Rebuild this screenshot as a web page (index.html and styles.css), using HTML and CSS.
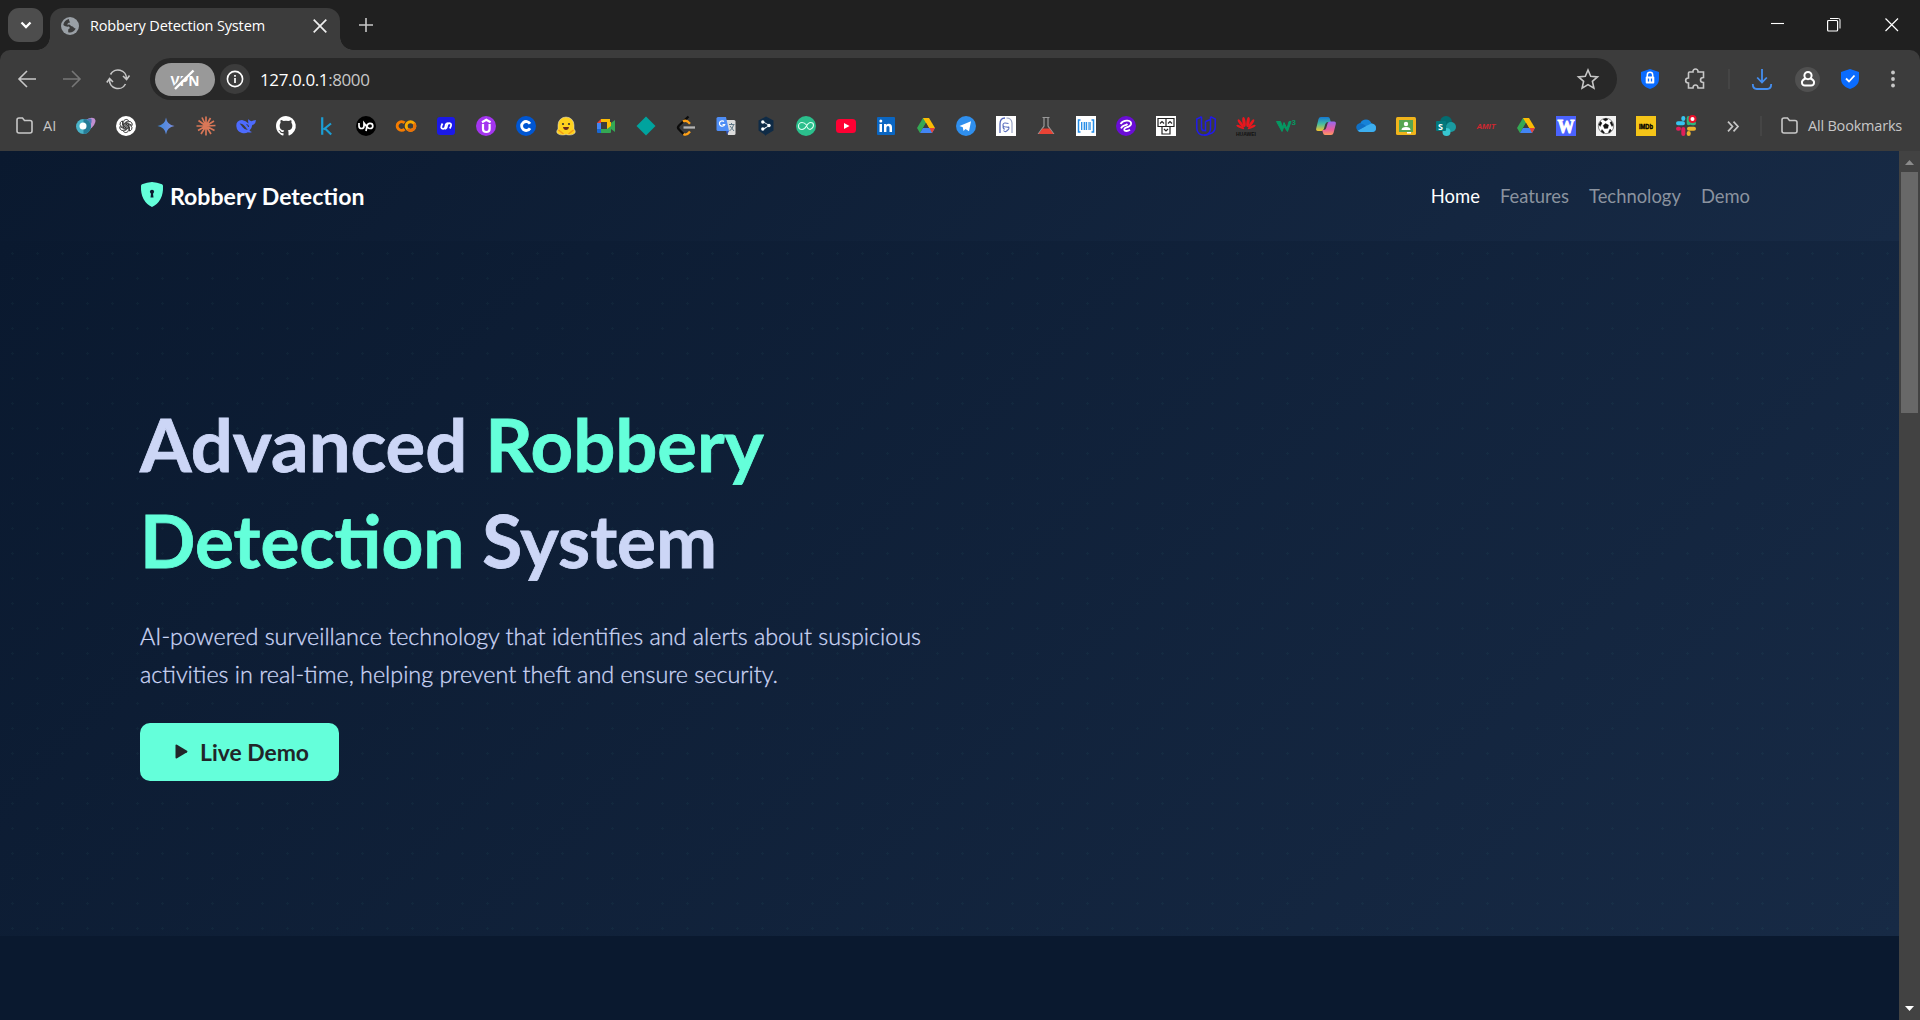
FILE: index.html
```html
<!DOCTYPE html>
<html lang="en">
<head>
<meta charset="utf-8">
<title>Robbery Detection System</title>
<link rel="stylesheet" href="styles.css">
</head>
<body>
<div class="browser">
  <header class="tabstrip">
    <button class="tab-search"><svg width="35" height="34"><path d="M13.5 14.5l4.500 4.500 4.500-4.500" fill="none" stroke="#fff" stroke-width="2.300"/></svg></button>
    <div class="tab">
      <svg class="globe" width="18" height="18" viewBox="0 0 18 18"><circle cx="9" cy="9" r="9" fill="#9aa0a6"/><path d="M8 2c-3 .5-5.300 3-5.700 6 1.700 1.400 3.200 1.800 5.500 1.600l1.200 1.300-1.800 1.700v2.600c3 .8 6-.8 7.600-3.800-2.300 0-2.200-2.400-4.800-2.500-1-1.500-2.800-1.700-3.300-.6-.7-1.700.3-2.700 2.400-2.800l-1-2z" fill="#3c3c3c"/><path d="M9.500 2.500l2.500 2-1.700 2.500 3.700 2 1.500-3z" fill="#9aa0a6"/></svg>
      <span class="tab-title">Robbery Detection System</span>
      <svg class="tab-close" width="14" height="14"><path d="M.7.7l12.600 12.600M13.300.7L.7 13.300" stroke="#eee" stroke-width="1.700"/></svg>
    </div>
    <svg class="new-tab" width="14" height="14"><path d="M7 0v14M0 7h14" stroke="#c7c7c7" stroke-width="1.600"/></svg>
    <div class="window-controls">
      <svg width="14" height="14"><path d="M0 5.500h13" stroke="#fff" stroke-width="1.100"/></svg>
      <svg width="14" height="14" fill="none" stroke="#fff"><path d="M3 .5h8.500q1.500 0 1.500 1.500v8.500" stroke-width="1"/><rect x=".6" y="2.500" width="10" height="10.500" rx="1" stroke-width="1.200"/></svg>
      <svg width="14" height="14"><path d="M.5.5l12.500 12.500M13 .5L.5 13" stroke="#fff" stroke-width="1.200"/></svg>
    </div>
  </header>

  <div class="chrome">
    <div class="toolbar">
      <div class="nav-buttons">
        <svg width="18" height="18" fill="none" stroke="#c7c7c7" stroke-width="1.600"><path d="M18 9H1M9 1L1 9l8 8"/></svg>
        <svg width="18" height="18" fill="none" stroke="#777" stroke-width="1.600"><path d="M0 9h17M9 1l8 8-8 8"/></svg>
        <svg width="24" height="20" fill="none" stroke="#c7c7c7" stroke-width="1.600"><path d="M4.500 5.500A8.500 8.500 0 0 1 20.500 9.500M3.500 10.500A8.500 8.500 0 0 0 19.500 15M17 7l3.600 3.500L23.500 6.500M.8 13.500L3.600 9.500 7 13"/></svg>
      </div>
      <div class="omnibox">
        <div class="vpn"><svg width="60" height="33"><text class="vpn-text" x="15.500" y="23" textLength="29" lengthAdjust="spacingAndGlyphs">VPN</text><path d="M18.500 24.500L36 7" stroke="#999" stroke-width="2"/><path d="M20 26L38.500 7.500" stroke="#fff" stroke-width="2.400"/></svg></div>
        <div class="site-info"><svg width="18" height="18"><circle cx="9" cy="9" r="7.600" fill="none" stroke="#fff" stroke-width="1.600"/><path d="M9 8v5M9 5v1.700" stroke="#fff" stroke-width="1.700"/></svg></div>
        <span class="url">127.0.0.1<span class="port">:8000</span></span>
        <svg class="star" width="22" height="22" viewBox="0 0 22 22"><path d="M11 2l2.700 6.300 6.800.6-5.100 4.500 1.500 6.800-5.900-3.600-5.900 3.600 1.500-6.800L1.500 8.900l6.800-.6z" fill="none" stroke="#c7c7c7" stroke-width="1.600"/></svg>
      </div>
      <div class="extensions">
        <svg class="ext-lock" width="18" height="20"><path d="M9 0l9 3v7c0 5-4 8.500-9 10-5-1.500-9-5-9-10V3z" fill="#0a6cff"/><path d="M6.300 8V6a2.700 2.700 0 0 1 5.400 0v2" fill="none" stroke="#fff" stroke-width="1.500"/><rect x="4.700" y="7.500" width="8.600" height="7" rx="1" fill="#fff"/><path d="M7.500 9.500v3M10.500 9.500v3" stroke="#0a6cff" stroke-width="1.300"/></svg>
        <svg class="ext-puzzle" width="22" height="22" fill="none" stroke="#c7c7c7" stroke-width="1.600"><path d="M4.500 4H8c-.5-4 5.500-4 5 0h5.500v5.500c-4 0-4 5 0 5V20H13c0-4-5-4-5 0H3.500v-5c-3.800 0-3.800-5 0-5V5q0-1 1-1z"/></svg>
        <span class="divider"></span>
        <svg class="ext-download" width="20" height="21" fill="none" stroke="#448ef0" stroke-width="1.800"><path d="M10 0v13M5.200 8.500l4.800 5 4.800-5M.8 15q0 5 4 5h10.400q4 0 4-5"/></svg>
        <div class="profile"><svg width="14" height="16" fill="none" stroke="#fff" stroke-width="2"><circle cx="7" cy="4.600" r="3.600"/><path d="M4.600 7.500C1 9 .8 11 1 12q.2 2.500 3 2.500h6q2.800 0 3-2.500c.2-1 0-3-3.600-4.500"/></svg></div>
        <svg class="ext-check" width="18" height="20"><path d="M9 0l9 3v7c0 5-4 8.500-9 10-5-1.500-9-5-9-10V3z" fill="#0a6cff"/><path d="M5 9.500l3 3 5.500-6" fill="none" stroke="#fff" stroke-width="1.800"/></svg>
        <svg class="menu" width="4" height="18" fill="#c7c7c7"><circle cx="2" cy="2.500" r="1.900"/><circle cx="2" cy="9" r="1.900"/><circle cx="2" cy="15.500" r="1.900"/></svg>
      </div>
    </div>

    <div class="bookmarks">
      <div class="folder"><svg width="17" height="18"><path d="M1 3q0-2 2-2h3.500l2 2.500H14q2 0 2 2V14q0 2-2 2H3q-2 0-2-2z" fill="none" stroke="#c7c7c7" stroke-width="1.600"/></svg><span class="folder-ai">AI</span></div>
      <div class="icons">
        <svg viewBox="0 0 20 20"><path d="M10 4q5-3.500 8.500-1.500 3 3-2.500 9l-5 4z" fill="#c08fd0"/><path d="M10 4q4-2.500 5.500-1 1 5-4.500 10z" fill="#5277b8"/><circle cx="7.500" cy="10.500" r="7.500" fill="#49b3c8"/><path d="M7.500 3a7.500 7.500 0 0 1 0 15z" fill="#267b96"/><circle cx="7" cy="10" r="3.500" fill="#fff"/></svg>
        <svg viewBox="0 0 20 20"><circle cx="10" cy="10" r="10" fill="#fff"/><g fill="none" stroke="#222" stroke-width=".8"><path id="petal" d="M7.400 11.500V6.300q.1-2.700 2.700-2.900 1.600 0 2.500 1.100L8.900 6.700v4"/><use href="#petal" transform="rotate(60 10 10)"/><use href="#petal" transform="rotate(120 10 10)"/><use href="#petal" transform="rotate(180 10 10)"/><use href="#petal" transform="rotate(240 10 10)"/><use href="#petal" transform="rotate(300 10 10)"/></g></svg>
        <svg viewBox="0 0 20 20"><defs><linearGradient id="gem"><stop stop-color="#3b87dc"/><stop offset="1" stop-color="#7c8fe0"/></linearGradient></defs><path d="M10 1.500q1 7.500 8.500 8.500-7.500 1-8.500 8.500Q9 11 1.500 10 9 9 10 1.500z" fill="url(#gem)"/></svg>
        <svg viewBox="0 0 20 20"><path d="M10 10V.5M10 10l4.500-8M10 10l8-5M10 10l9.500-.5M10 10l8.500 4.500M10 10l5 8M10 10v9.500M10 10l-5 8M10 10l-8 4.500M10 10H.5M10 10L2.500 4.500M10 10L6 1.500" stroke="#d97757" stroke-width="1.700"/></svg>
        <svg viewBox="0 0 20 20"><path d="M.3 10Q0 4.500 6 4q4 .5 6.500 3.500Q11.500 5 12.500 3q1 2 3 2.300Q17 4.500 20 4q-.5 4.500-3.700 5-.5 3.500-2.800 5.500 1 1 2.500 1.500-2 1-4 .3-2.500 1.400-6 .7Q.8 15.500.3 10z" fill="#4d6bfe"/><path d="M3.500 7.500q3.500 0 5.500 3t3 3q-3 .8-5.500-2.500T3.500 7.500z" fill="#3c3c3c"/><path d="M10.500 8.500q2 .3 2 2.500" fill="none" stroke="#3c3c3c" stroke-width="1.100"/></svg>
        <svg viewBox="0 0 24 24"><path fill="#fff" d="M12 0C5.400 0 0 5.400 0 12c0 5.300 3.400 9.800 8.200 11.400.6.100.8-.3.800-.6v-2.200c-3.300.7-4-1.400-4-1.400-.6-1.400-1.400-1.800-1.400-1.800-1-.7.100-.7.100-.7 1.200.1 1.900 1.200 1.900 1.200 1 1.800 2.800 1.300 3.500 1 .1-.8.400-1.300.7-1.600-2.600-.3-5.400-1.300-5.400-6 0-1.300.5-2.400 1.200-3.200-.1-.3-.5-1.500.1-3.200 0 0 1-.3 3.300 1.200a11.500 11.500 0 0 1 6 0C17.300 4.600 18.300 5 18.300 5c.6 1.600.2 2.800.1 3.100.8.900 1.200 2 1.200 3.200 0 4.600-2.800 5.600-5.500 5.900.5.400.9 1.100.9 2.200v3.300c0 .3.200.7.800.6A12 12 0 0 0 12 0z"/></svg>
        <svg viewBox="0 0 20 20"><path d="M6.200 1.200v17.500M15 7.500L7.500 13.500M8.500 12l6.700 6.500" fill="none" stroke="#1b9ed4" stroke-width="2.200"/></svg>
        <svg viewBox="0 0 20 20"><circle cx="10" cy="10" r="10" fill="#000"/><path d="M3 7v3q0 2.500 2.500 2.500T8 10V7l3 4M10 15l1-5q.7-2.700 3-2.700 2.800 0 2.800 2.600T14 12.500q-2.500 0-4-4" fill="none" stroke="#fff" stroke-width="1.700"/></svg>
        <svg viewBox="0 0 20 20" fill="none" stroke-width="3"><circle cx="14.500" cy="10" r="4.300" stroke="#f9ab00"/><path d="M8.500 6.900A4.300 4.300 0 1 0 8.500 13.100" stroke="#f57c00"/><path d="M11.400 13A4.300 4.300 0 0 0 18 7.500" stroke="#e8710a"/></svg>
        <svg viewBox="0 0 20 20"><rect x="1" y="1" width="18" height="18" rx="3" fill="#1b19e8"/><path d="M6.500 7.500Q3.700 12.500 7 12.800q2.300 0 2.500-2.800t2.800-2.800" fill="none" stroke="#fff" stroke-width="1.800"/><path d="M9 12.800q1.800-.2 2-2.800.3-2.800 2.500-2.800 3.200.3.300 5.300" fill="none" stroke="#fff" stroke-width="1.700"/></svg>
        <svg viewBox="0 0 20 20"><circle cx="10" cy="10" r="10" fill="#a435f0"/><path d="M6 6.300l4.300-2.500 4.300 2.500M7 8v5q0 3 3.300 3t3.300-3V8" fill="none" stroke="#fff" stroke-width="2.200"/></svg>
        <svg viewBox="0 0 20 20"><circle cx="10" cy="10" r="10" fill="#0056d2"/><path d="M14 7.700A4.500 4.500 0 1 0 14 12.300" fill="none" stroke="#fff" stroke-width="2.800"/></svg>
        <svg viewBox="0 0 20 20"><path d="M10 1a8 8 0 0 1 8 8v4q2 2 1 4-3 3-9 1.500Q4 20 1 17q-1-2 1-4V9a8 8 0 0 1 8-8z" fill="#ffd21e" stroke="#ddd" stroke-width=".5"/><circle cx="7" cy="8" r="1.100" fill="#333"/><circle cx="13" cy="8" r="1.100" fill="#333"/><path d="M7 11h6q-.5 3-3 3t-3-3z" fill="#6b2a1c"/><path d="M2.500 14l5 4M17.500 14l-5 4" stroke="#f39a17" stroke-width="1.500"/></svg>
        <svg viewBox="0 0 20 20"><path d="M5 3h9v3H5z" fill="#fbbc04"/><path d="M5 3v4H1z" fill="#ea4335"/><path d="M1 7h4v6H1z" fill="#4285f4"/><path d="M1 13h4v4H2q-1 0-1-1z" fill="#1967d2"/><path d="M5 13h6v4H5zM11 10l4-3 4-3v12l-4-3v3q0 1-1 1h-3z" fill="#34a853"/><path d="M11 6h4v4l-4 3z" fill="#fbbc04"/></svg>
        <svg viewBox="0 0 20 20"><path d="M10 .5l9.500 9.500-9.500 9.500L.5 10z" fill="#00a39e"/></svg>
        <svg viewBox="0 0 20 20" fill="none" stroke-width="2.300"><path d="M12.500.5L3 9.500q-2 2 0 4L7.500 18" stroke="#0b0b0b"/><path d="M7 5.700q3-2.500 7 2M7.500 18q3 2 6.500-2.500" stroke="#ffa116"/><path d="M7.500 11.500H19" stroke="#b3b3b3"/></svg>
        <svg viewBox="0 0 20 20"><path d="M8 4h10q1.500 0 1.500 1.500v12q0 1.500-1.500 1.500h-6z" fill="#dcdcdc"/><path d="M2 1h8l3 14H2Q.5 15 .5 13.500v-11Q.5 1 2 1z" fill="#4e8df5"/><path d="M10 15h3l-2 4z" fill="#3352b5"/><path d="M8 5.500a2.700 2.700 0 1 0 .7 3H6.500" fill="none" stroke="#fff" stroke-width="1.200"/><path d="M13 8.500h5.500M15.500 7v1.500M17.500 9q-1 4-4 6M14 10l4 5" stroke="#607988" stroke-width="1" fill="none"/></svg>
        <svg viewBox="0 0 20 20"><path d="M10 .5l7.500 4v10L10 19v1l-1.500-1.500-6-4v-10z" fill="#0f2b46"/><path d="M6.500 5.500l7 4-7 4M6.500 13.500l4-2.200" stroke="#dce4ec" stroke-width="1" fill="none"/><g fill="#fff"><circle cx="6.800" cy="6" r="1.700"/><circle cx="13" cy="9.500" r="1.700"/><circle cx="6.800" cy="13" r="1.700"/></g></svg>
        <svg viewBox="0 0 20 20"><circle cx="10" cy="10" r="10" fill="#2bbf8c"/><path d="M10.500 9Q8.500 6.500 6 6.500A3.300 3.300 0 0 0 6 13.500Q8.500 13.500 10.500 10T14.500 6.500q3 0 3 2.500 0 3-3.500 4.500-2.500-.5-3-3" fill="none" stroke="#dcfff2" stroke-width="1.100"/></svg>
        <svg viewBox="0 0 20 20"><rect y="3" width="20" height="14" rx="3.500" fill="#ff0033"/><path d="M8 7l5.500 3L8 13z" fill="#fff"/></svg>
        <svg viewBox="0 0 20 20"><rect x="1" y="1" width="18" height="18" rx="1" fill="#0a66c2"/><g fill="#fff"><path d="M3.500 8H6v8H3.500zM8 8h2.300v1q.8-1.200 2.500-1.200 3.200 0 3.200 3.600V16h-2.500v-4.200q0-1.700-1.500-1.700t-1.600 1.700V16H8z"/><circle cx="4.800" cy="5" r="1.500"/></g></svg>
        <svg viewBox="0 0 20 20"><path d="M7 2h6L4 17 1 12z" fill="#34a853"/><path d="M7 2h6l6 10h-6z" fill="#fbbc04"/><path d="M7 12h12l-3 5H4z" fill="#4285f4"/><path d="M13.500 12H19l-3 5z" fill="#ea4335"/><path d="M10 7l3 5H7z" fill="#3c3c3c"/></svg>
        <svg viewBox="0 0 20 20"><circle cx="10" cy="10" r="10" fill="#2f8fee"/><path d="M3.500 10l11.500-4.700-2 10L9.500 13l-2 2-.7-3.700z" fill="#fff"/></svg>
        <svg viewBox="0 0 20 20"><path d="M0 0h20v20H0z" fill="#fff"/><path d="M4 17V8q0-6 5-6" stroke="#5366bb" stroke-width="1.300" fill="none"/><path d="M10.500 2q5 0 5.500 5v10" stroke="#98a2c4" stroke-width="1.200" fill="none"/><path d="M12.500 7.500q-5-1.500-5.500 1t3.500 2.500 1.500 3-4.500.5M7 8.500q-.5 3 1.500 5M12.500 10.500q1.500 3-2 4" stroke="#5b6fbd" stroke-width="1.100" fill="none"/></svg>
        <svg viewBox="0 0 20 20"><path d="M6.500 1.500h7M8 2v8L2.700 17.500h14.600L12 10V2" fill="none" stroke="#9a9a9a" stroke-width="1.200"/><path d="M6.500 12.500h7l4 5.500h-15z" fill="#ea4335"/></svg>
        <svg viewBox="0 0 20 20"><path d="M0 0h20v20H0z" fill="#fff"/><path d="M4.500 4H2.500v12h2M15.500 4h2v12h-2" fill="none" stroke="#228be6" stroke-width="1.500"/><path d="M5.700 6v8M8.300 6v8M10.300 6v8M14 6v8" stroke="#228be6" stroke-width="1.300"/><path d="M12.300 6v8" stroke="#228be6" stroke-width=".7"/></svg>
        <svg viewBox="0 0 20 20"><circle cx="10" cy="10" r="10" fill="#6a0dd6"/><path d="M4.500 8Q7 4.300 11.500 4.700q4.300.5 3.500 3.500-.8 2.300-4.500 3.200-3 1-2 3 2.300 1.500 5.500-.6M5 12.300q1-2.300 3.500-3 2-.3 3-1.300" fill="none" stroke="#fff" stroke-width="1.800"/></svg>
        <svg viewBox="0 0 20 20"><path d="M0 0h20v20H0z" fill="#fff"/><path d="M2 2.500h16v8H2zM10 2.500v8M6 10.500v7.500h8v-7.500M4 7.500l2-2 2 2M12 7.500l2-2 2 2M8 13l2 2 2-2" fill="none" stroke="#222" stroke-width="1.200"/></svg>
        <svg viewBox="0 0 20 20" fill="none" stroke="#211be9" stroke-width="1.500"><path d="M5.500.8L.8 3v9q0 7 8 7.300 3-.1 4.500-1.300"/><path d="M5.500.8v11q0 3 4 3V5.500M9.500 14.500q-4 0-4 .1M14.500.7v13q-1 5-6.500 5.500M14.500.7l4.700 2.200v8q0 5.500-6 7.100M9.500 5.500l5-2"/></svg>
        <svg viewBox="0 0 20 20"><g fill="#e8171e"><ellipse cx="8" cy="6" rx="1.600" ry="5" transform="rotate(-8 8 6)"/><ellipse cx="12" cy="6" rx="1.600" ry="5" transform="rotate(8 12 6)"/><ellipse cx="4.800" cy="7.500" rx="1.400" ry="5" transform="rotate(-35 4.800 7.500)"/><ellipse cx="15.200" cy="7.500" rx="1.400" ry="5" transform="rotate(35 15.200 7.500)"/><ellipse cx="4.300" cy="11" rx="1.200" ry="4.300" transform="rotate(-65 4.300 11)"/><ellipse cx="15.700" cy="11" rx="1.200" ry="4.300" transform="rotate(65 15.700 11)"/></g><text x="0" y="19.500" class="ico-huawei" textLength="20" lengthAdjust="spacingAndGlyphs">HUAWEI</text></svg>
        <svg viewBox="0 0 20 20"><path d="M.5 5.500h4L6.500 11 8 6.500l3 6 2-7h2l-3.500 10L8 10.500l-2 5z" fill="#059862" stroke="#059862"/><text x="15.500" y="9" class="ico-w3">3</text></svg>
        <svg viewBox="0 0 20 20"><defs><linearGradient id="c1" x2="0" y2="1"><stop stop-color="#1478d4"/><stop offset=".5" stop-color="#45bda0"/><stop offset="1" stop-color="#f5c52c"/></linearGradient><linearGradient id="c2" x2="0" y2="1"><stop stop-color="#9668f0"/><stop offset=".6" stop-color="#e85d9c"/><stop offset="1" stop-color="#ff9a60"/></linearGradient></defs><path d="M5 1h7q1.500 0 2 2l.8 3h-2.500Q10 6 9.300 8l-1.500 5q-.7 2-2.500 2H2Q-.5 15 .3 12L2.500 3Q3 1 5 1z" fill="url(#c1)"/><path d="M15 19H9q-1.500 0-2-2l-.8-3h1.500q2 0 2.500-2l1.500-5q.5-1.500 2.200-1.500H18q2.500 0 1.700 3L17.500 17q-.5 2-2.500 2z" fill="url(#c2)"/></svg>
        <svg viewBox="0 0 20 20"><path d="M5 16a4.500 4.500 0 0 1-.7-8.800Q6 3.500 10 3.500q4 0 5.500 4 4.500.5 4.500 4.500t-4 4z" fill="#1683d8"/><path d="M10 10l5.500-2.500q4.500.5 4.500 4.500t-4 4H5q-2 0-3.500-1.500z" fill="#3dafef"/><path d="M4 7.200q3 0 6 2.800l-8 4.500Q0 13 .2 11q.3-3 3.800-3.800z" fill="#0f6fc4"/></svg>
        <svg viewBox="0 0 20 20"><rect y="1" width="20" height="18" rx="1.500" fill="#f0b41b"/><path d="M3 4h14v12H3z" fill="#57a552"/><circle cx="10" cy="8" r="2.200" fill="#fff"/><path d="M5.500 14q0-3 4.500-3t4.500 3zM11 16h4v1.500h-4z" fill="#fff"/></svg>
        <svg viewBox="0 0 20 20"><circle cx="10" cy="6" r="6" fill="#036c70"/><circle cx="15" cy="11" r="5" fill="#1a9ba1"/><circle cx="10.500" cy="16" r="4" fill="#37c6d0"/><rect y="5" width="10" height="10" rx="1" fill="#03787c"/><text x="2" y="13.500" class="ico-s">S</text></svg>
        <svg viewBox="0 0 20 20"><text x=".5" y="13" class="ico-amit" textLength="19" lengthAdjust="spacingAndGlyphs">AMIT</text></svg>
        <svg viewBox="0 0 20 20"><path d="M7 2h6L4 17 1 12z" fill="#34a853"/><path d="M7 2h6l6 10h-6z" fill="#fbbc04"/><path d="M7 12h12l-3 5H4z" fill="#4285f4"/><path d="M13.500 12H19l-3 5z" fill="#ea4335"/><path d="M10 7l3 5H7z" fill="#3c3c3c"/></svg>
        <svg viewBox="0 0 20 20"><path d="M0 0h20v20H0z" fill="#4a63ff"/><text x="1.500" y="16.500" class="ico-w" textLength="17" lengthAdjust="spacingAndGlyphs">W</text></svg>
        <svg viewBox="0 0 20 20"><path d="M0 0h20v20H0z" fill="#f2f2f2"/><circle cx="10" cy="10" r="7.700" fill="#fff" stroke="#555" stroke-width=".7"/><path d="M9.500 7.500l3 1.500-.7 3.300-3.300.2-1.300-3zM7 3.500l3-1.200 2 1.200-2.500 1.500zM2.800 8.500l1.700-3 1.500 1.500-1.800 3.500zM17.200 9l-1.700-3.500L14 6.500l2 4zM5 15.500l1-2 2.500 3-1 .8zM15.500 14.500l-1.500-1.500-1.700 3.500 1.200.3z" fill="#111" stroke="#111" stroke-width=".4"/></svg>
        <svg viewBox="0 0 20 20"><path d="M0 0h20v20H0z" fill="#f5c518"/><text x="3" y="13" class="ico-imdb" textLength="14" lengthAdjust="spacingAndGlyphs">IMDb</text></svg>
        <svg viewBox="0 0 20 20" stroke-width="4" stroke-linecap="round"><path d="M2 7.300h5M7.300 2v1" stroke="#36c5f0"/><path d="M12.700 2v5.300M16 7.300h2" stroke="#2eb67d"/><path d="M13 12.700h5M12.700 17v1" stroke="#ecb22e"/><path d="M7.300 13v5M2 12.700h1" stroke="#e01e5a"/><circle cx="16.500" cy="3" r="3" fill="#fff" stroke="#e8102a" stroke-width="2"/></svg>
      </div>
      <svg class="more" width="12" height="11" fill="none" stroke="#c7c7c7" stroke-width="1.700"><path d="M1 .7l4.500 4.800L1 10.300M6.500.7L11 5.500l-4.500 4.800"/></svg>
      <span class="divider bm-divider"></span>
      <div class="folder all"><svg width="17" height="18"><path d="M1 3q0-2 2-2h3.500l2 2.500H14q2 0 2 2V14q0 2-2 2H3q-2 0-2-2z" fill="none" stroke="#c7c7c7" stroke-width="1.600"/></svg><span class="folder-all">All Bookmarks</span></div>
    </div>
  </div>

  <div class="viewport">
    <main class="page">
      <nav class="navbar">
        <div class="brand"><svg width="22" height="25" viewBox="0 0 22 25"><path d="M11 0q5 .5 10 2.300Q22 2.700 22 4q.3 8-2.500 13Q16.500 22.500 11 25 5.500 22.500 2.500 17-.3 12 0 4 0 2.700 1 2.300 6 .5 11 0z" fill="#64ffda"/><circle cx="11" cy="9.800" r="2.100" fill="#0a192f"/><path d="M10.200 10h1.600l.7 5.500h-3z" fill="#0a192f"/></svg><span class="brand-name">Robbery Detection</span></div>
        <div class="links"><a class="active">Home</a><a>Features</a><a>Technology</a><a>Demo</a></div>
      </nav>
      <section class="hero">
        <h1><span class="line">Advanced <span class="accent">Robbery</span></span><span class="line second"><span class="accent">Detection</span> System</span></h1>
        <p>AI-powered surveillance technology that identifies and alerts about suspicious<br>activities in real-time, helping prevent theft and ensure security.</p>
        <a class="cta"><svg width="13" height="15"><path d="M.5 1.500Q.5 0 2 .7l10 6q1 .8 0 1.600l-10 6Q.5 15 .5 13.500z" fill="#212529"/></svg><span>Live Demo</span></a>
      </section>
    </main>
    <aside class="scrollbar">
      <svg width="21" height="21"><path d="M6 14h9l-4.500-5z" fill="#8b8b8b"/></svg>
      <div class="thumb"></div>
      <svg class="down" width="21" height="21"><path d="M6 7h9l-4.500 5z" fill="#fff"/></svg>
    </aside>
  </div>
</div>
</body>
</html>
```
FILE: styles.css
```css
* { box-sizing: border-box; }
body { margin: 0; background: #202020; overflow: hidden; }
svg { display: block; flex: none; overflow: visible; }
button { border: 0; padding: 0; }
.browser { width: 1920px; height: 1020px; display: flex; flex-direction: column; font-family: "Open Sans", "Noto Sans", sans-serif; }

.tabstrip { height: 50px; display: flex; background: #202020; }
.tab-search { width: 35px; height: 34px; margin: 8px 0 0 8px; border-radius: 11px; background: #4d4d4d; }
.tab { position: relative; width: 290px; height: 42px; margin: 8px 0 0 7px; padding: 0 13px 7px 11px; border-radius: 13px 13px 0 0; background: #3c3c3c; display: flex; align-items: center; }
.tab::before, .tab::after { content: ""; position: absolute; bottom: 0; width: 13px; height: 13px; }
.tab::before { left: -13px; background: radial-gradient(circle at 0 0, transparent 12.5px, #3c3c3c 13px); }
.tab::after { right: -13px; background: radial-gradient(circle at 100% 0, transparent 12.5px, #3c3c3c 13px); }
.tab-title { margin-left: 11px; font-size: 14.5px; color: #fff; white-space: nowrap; letter-spacing: -.15px; }
.tab-close { margin-left: auto; }
.new-tab { margin: 18px 0 0 19px; }
.window-controls { margin: 18px 21px 0 auto; display: flex; gap: 42px; }
.window-controls svg:nth-child(2) { margin-right: 2px; }

.chrome { height: 101px; background: #3c3c3c; border-radius: 10px 10px 0 0; }
.toolbar { height: 58px; display: flex; align-items: flex-start; padding-top: 8px; }
.nav-buttons { width: 150px; height: 42px; padding-left: 18px; display: flex; align-items: center; gap: 25px; }
.nav-buttons svg:nth-child(2) { margin-left: 2px; }
.omnibox { width: 1467px; height: 42px; border-radius: 21px; background: #282828; display: flex; align-items: center; padding: 0 18px 0 5px; }
.vpn { width: 60px; height: 33px; border-radius: 17px; background: #999; }
.vpn-text { font: bold 15px "Open Sans", sans-serif; fill: #fff; }
.site-info { width: 30px; height: 30px; margin-left: 5px; border-radius: 50%; background: #3c3c3c; display: grid; place-items: center; }
.url { margin-left: 10px; font-size: 17px; color: #fff; letter-spacing: -.4px; }
.port { color: #c7c7c7; }
.star { margin-left: auto; }
.extensions { height: 42px; display: flex; align-items: center; }
.ext-lock { margin-left: 24px; }
.ext-puzzle { margin-left: 26px; }
.divider { width: 2px; height: 20px; background: #454545; }
.extensions .divider { margin-left: 21px; }
.ext-download { margin-left: 22px; }
.profile { width: 25px; height: 25px; margin-left: 23px; border-radius: 50%; background: #505050; display: grid; place-items: center; }
.ext-check { margin-left: 21px; }
.menu { margin-left: 32px; }

.bookmarks { height: 36px; display: flex; align-items: center; color: #c7c7c7; font-size: 14.5px; white-space: nowrap; }
.folder { display: flex; align-items: center; gap: 10px; padding-left: 16px; width: 76px; }
.folder-ai, .folder-all { position: relative; top: -1px; }
.icons { display: flex; gap: 20px; }
.icons svg { width: 20px; height: 20px; }
.more { margin-left: 31px; }
.bm-divider { margin-left: 21px; }
.folder.all { width: auto; padding-left: 19px; }
.folder-all { letter-spacing: -.2px; }
.ico-huawei { font: bold 5px "Liberation Sans", sans-serif; fill: #111; }
.ico-w3 { font: bold 8px "Liberation Sans", sans-serif; fill: #059862; }
.ico-s { font: bold 9px "Open Sans", sans-serif; fill: #fff; }
.ico-amit { font: italic bold 8px "Liberation Sans", sans-serif; fill: #d22730; }
.ico-w { font: bold 18px "Liberation Serif", serif; fill: #fff; stroke: #fff; stroke-width: 1px; }
.ico-imdb { font: bold 7.500px "Liberation Sans", sans-serif; fill: #000; stroke: #000; stroke-width: .4px; }

.viewport { height: 869px; display: flex; }
.page { width: 1899px; background: #0a192f; font-family: Lato, "Open Sans", sans-serif; }
.navbar { height: 90px; padding: 0 149px 0 141px; display: flex; justify-content: space-between; align-items: center; background: linear-gradient(135deg, #0a192f, #172a45); }
.brand { display: flex; align-items: center; gap: 7px; color: #fff; font-size: 23.100px; font-weight: 700; }
.brand svg { margin-bottom: 3px; }
.brand-name { line-height: 30px; }
.links { display: flex; gap: 20px; font-size: 18.400px; line-height: 30px; color: #8b939f; }
.links .active { color: #fff; }
.hero { height: 695px; padding: 155px 140px 0; background: radial-gradient(circle, rgba(100, 255, 218, .035) 1px, transparent 1.400px) 0 0 / 25px 25px, linear-gradient(135deg, #0a192f, #172a45); }
h1 { margin: 0 0 30px; font-size: 72.500px; font-weight: 700; line-height: 96px; color: #ccd6f6; white-space: nowrap; }
.line { display: block; width: 640px; transform: scaleX(1.023); transform-origin: 0 0; -webkit-text-stroke: .8px; }
.line.second { transform: scaleX(1.006); }
.accent { color: #64ffda; }
p { width: 800px; margin: 0 0 30px; font-size: 22.800px; line-height: 37.500px; font-weight: 300; color: #ccd6f6; white-space: nowrap; -webkit-text-stroke: .3px #ccd6f6; transform: scaleX(1.024); transform-origin: 0 0; }
.cta { width: 199px; height: 58px; padding-left: 35px; border-radius: 10px; background: #64ffda; color: #212529; display: flex; align-items: center; gap: 12px; font-size: 22.900px; font-weight: 700; white-space: nowrap; }
.cta svg { margin-bottom: 2px; }

.scrollbar { width: 21px; background: #424242; display: flex; flex-direction: column; }
.thumb { width: 17px; height: 241px; margin-left: 2px; background: #686868; }
.down { margin-top: auto; }
```
